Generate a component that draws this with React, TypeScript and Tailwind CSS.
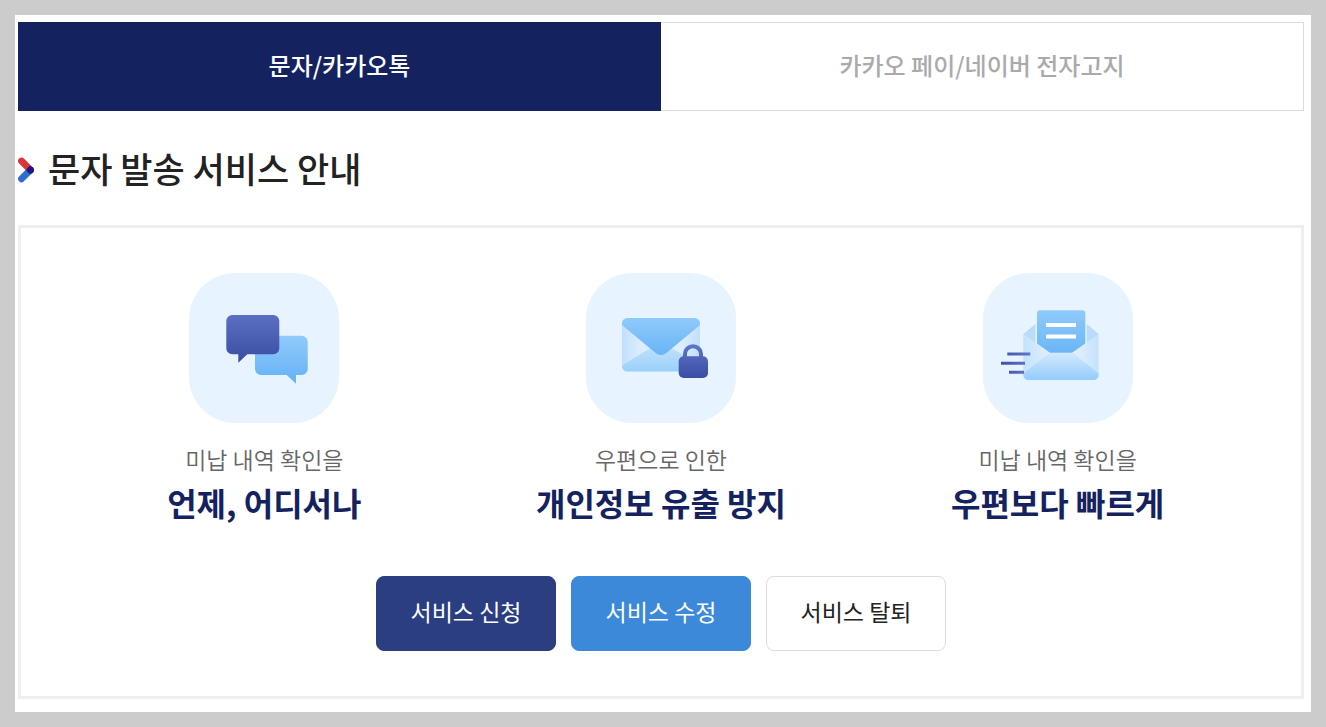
import React from "react";

function ChatIcon() {
  return (
    <svg viewBox="0 0 150 150" className="size-[150px]" aria-hidden="true">
      <defs>
        <linearGradient id="chatDark" x1="0" y1="0" x2="0" y2="1">
          <stop offset="0" stopColor="#5b70c2" />
          <stop offset="1" stopColor="#394da2" />
        </linearGradient>
        <linearGradient id="chatLight" x1="0" y1="0" x2="0" y2="1">
          <stop offset="0" stopColor="#90cafb" />
          <stop offset="1" stopColor="#63b2f6" />
        </linearGradient>
      </defs>
      <rect width="150" height="150" rx="46" fill="#e7f4ff" />
      <path
        d="M72 62.7H112.7a6 6 0 0 1 6 6V96a6 6 0 0 1-6 6H107v8.7L97.7 102H72a6 6 0 0 1-6-6V68.7a6 6 0 0 1 6-6Z"
        fill="url(#chatLight)"
      />
      <path
        d="M43.3 42H84.3a6 6 0 0 1 6 6V75.3a6 6 0 0 1-6 6H58.3L49.3 89.7V81.3H43.3a6 6 0 0 1-6-6V48a6 6 0 0 1 6-6Z"
        fill="url(#chatDark)"
      />
    </svg>
  );
}

function SecureMailIcon() {
  return (
    <svg viewBox="0 0 150 150" className="size-[150px]" aria-hidden="true">
      <defs>
        <linearGradient id="mailSides" x1="0" y1="0" x2="1" y2="0">
          <stop offset="0" stopColor="#c0e0fb" />
          <stop offset="0.25" stopColor="#dceefd" />
          <stop offset="0.75" stopColor="#dceefd" />
          <stop offset="1" stopColor="#c0e0fb" />
        </linearGradient>
        <linearGradient id="mailBottom" x1="0" y1="0" x2="0" y2="1">
          <stop offset="0" stopColor="#c2e1fc" />
          <stop offset="1" stopColor="#9ad0fb" />
        </linearGradient>
        <linearGradient id="mailFlap" x1="0" y1="0" x2="0" y2="1">
          <stop offset="0" stopColor="#90cafb" />
          <stop offset="1" stopColor="#68b4f6" />
        </linearGradient>
        <linearGradient id="lockFill" x1="0" y1="71" x2="0" y2="105" gradientUnits="userSpaceOnUse">
          <stop offset="0" stopColor="#6076c8" />
          <stop offset="1" stopColor="#394da2" />
        </linearGradient>
      </defs>
      <rect width="150" height="150" rx="46" fill="#e7f4ff" />
      <rect x="36" y="45" width="78" height="53.5" rx="5.5" fill="url(#mailSides)" />
      <path
        d="M36 92.5L61 77Q75 69 89 77L114 92.5V93a5.5 5.5 0 0 1-5.5 5.5H41.5a5.5 5.5 0 0 1-5.5-5.5Z"
        fill="url(#mailBottom)"
      />
      <path
        d="M41.5 45H108.5a5.5 5.5 0 0 1 5.5 5.5V52L81 79.5Q75 84.5 69 79.5L36 52V50.5a5.5 5.5 0 0 1 5.5-5.5Z"
        fill="url(#mailFlap)"
      />
      <path
        d="M99 85V81a8 7.7 0 0 1 16 0V85"
        fill="none"
        stroke="url(#lockFill)"
        strokeWidth="4"
      />
      <rect x="92.7" y="83.3" width="29.3" height="21.7" rx="5" fill="url(#lockFill)" />
    </svg>
  );
}

function FastMailIcon() {
  return (
    <svg viewBox="0 0 150 150" className="size-[150px]" aria-hidden="true">
      <defs>
        <linearGradient id="openSides" x1="0" y1="0" x2="1" y2="0">
          <stop offset="0" stopColor="#c3e2fc" />
          <stop offset="0.3" stopColor="#dceefd" />
          <stop offset="0.75" stopColor="#dceefd" />
          <stop offset="1" stopColor="#c3e2fc" />
        </linearGradient>
        <linearGradient id="openBottom" x1="0" y1="0" x2="0" y2="1">
          <stop offset="0" stopColor="#d2e9fd" />
          <stop offset="1" stopColor="#94ccfb" />
        </linearGradient>
        <linearGradient id="paper" x1="0" y1="0" x2="0" y2="1">
          <stop offset="0" stopColor="#90cafb" />
          <stop offset="1" stopColor="#6ab5f7" />
        </linearGradient>
        <linearGradient id="speed" x1="18" y1="0" x2="48" y2="0" gradientUnits="userSpaceOnUse">
          <stop offset="0" stopColor="#3d50a5" />
          <stop offset="1" stopColor="#6477c8" />
        </linearGradient>
      </defs>
      <rect width="150" height="150" rx="46" fill="#e7f4ff" />
      <path d="M40.3 61L52.5 51V72ZM115.7 61L103.7 51V72Z" fill="#b9dcfb" />
      <path
        d="M40.3 61L67 80H89L115.7 61V101.5a5.5 5.5 0 0 1-5.5 5.5H45.8a5.5 5.5 0 0 1-5.5-5.5Z"
        fill="url(#openSides)"
      />
      <path
        d="M66 80H90L115.7 100.5V101.5a5.5 5.5 0 0 1-5.5 5.5H45.8a5.5 5.5 0 0 1-5.5-5.5V100.5Z"
        fill="url(#openBottom)"
      />
      <path
        d="M57 37.3H99.3a3 3 0 0 1 3 3V70.5L89 79.7H67L54 70.5V40.3a3 3 0 0 1 3-3Z"
        fill="url(#paper)"
      />
      <path d="M63 50h30v4h-30ZM63 61.4h30v4h-30Z" fill="#fff" />
      <path d="M24.3 79.5h23v3h-23ZM18 88.8h24v3h-24ZM26 97.8h15v3h-15Z" fill="url(#speed)" />
    </svg>
  );
}

function HeadingMark() {
  return (
    <svg viewBox="0 0 16 26" className="h-[26px] w-4 shrink-0" aria-hidden="true">
      <path d="M12.3 13L3.5 21.8" stroke="#2d6fce" strokeWidth="6.8" strokeLinecap="round" />
      <path d="M3.5 4L12.3 12.8" stroke="#dc3535" strokeWidth="6.8" strokeLinecap="round" />
      <path d="M12.3 8.6L16 12.9L12.3 17.200L8 12.9Z" fill="#1b1787" />
      <circle cx="12.6" cy="12.9" r="3.4" fill="#1b1787" />
    </svg>
  );
}

const features = [
  { icon: <ChatIcon />, lead: "미납 내역 확인을", title: "언제, 어디서나" },
  { icon: <SecureMailIcon />, lead: "우편으로 인한", title: "개인정보 유출 방지" },
  { icon: <FastMailIcon />, lead: "미납 내역 확인을", title: "우편보다 빠르게" },
];

const actions = [
  { label: "서비스 신청", style: "border-[#2c3e82] bg-[#2c3e82] text-white" },
  { label: "서비스 수정", style: "border-[#3c89d9] bg-[#3c89d9] text-white" },
  { label: "서비스 탈퇴", style: "border-[#dddddd] bg-white text-[#222222]" },
];

export default function App() {
  return (
    <div className="min-h-screen bg-[#cccccc] p-[15px] font-['Noto_Sans_CJK_KR',sans-serif]">
      <main className="bg-white pt-[7px] pr-[7px] pb-[13px] pl-[3px]">
        <div role="tablist" className="grid grid-cols-2 text-2xl font-medium">
          <button
            role="tab"
            aria-selected="true"
            className="h-[89px] border border-[#14235f] bg-[#14235f] pb-1 text-white"
          >
            문자/카카오톡
          </button>
          <button
            role="tab"
            aria-selected="false"
            className="h-[89px] border border-l-0 border-[#dddddd] bg-white pb-1 text-[#aaaaaa]"
          >
            카카오 페이/네이버 전자고지
          </button>
        </div>

        <div className="flex h-[114px] items-center gap-3.5 pt-1">
          <HeadingMark />
          <h2 className="pb-1 text-[35px] leading-[48px] font-medium text-[#222222]">
            문자 발송 서비스 안내
          </h2>
        </div>

        <section className="border-[3px] border-[#eeeeee] p-[45px]">
          <ul className="grid grid-cols-3">
            {features.map((f) => (
              <li key={f.title} className="flex flex-col items-center text-center">
                {f.icon}
                <p className="mt-5 text-[23px] leading-8 font-[350] text-[#666666]">{f.lead}</p>
                <strong className="mt-1 text-[32px] leading-[46px] font-bold text-[#14235f]">
                  {f.title}
                </strong>
              </li>
            ))}
          </ul>
          <div className="mt-[51px] flex justify-center gap-[15px]">
            {actions.map((a) => (
              <button
                key={a.label}
                className={`h-[75px] w-[180px] rounded-lg border pb-1 text-[23px] ${a.style}`}
              >
                {a.label}
              </button>
            ))}
          </div>
        </section>
      </main>
    </div>
  );
}
